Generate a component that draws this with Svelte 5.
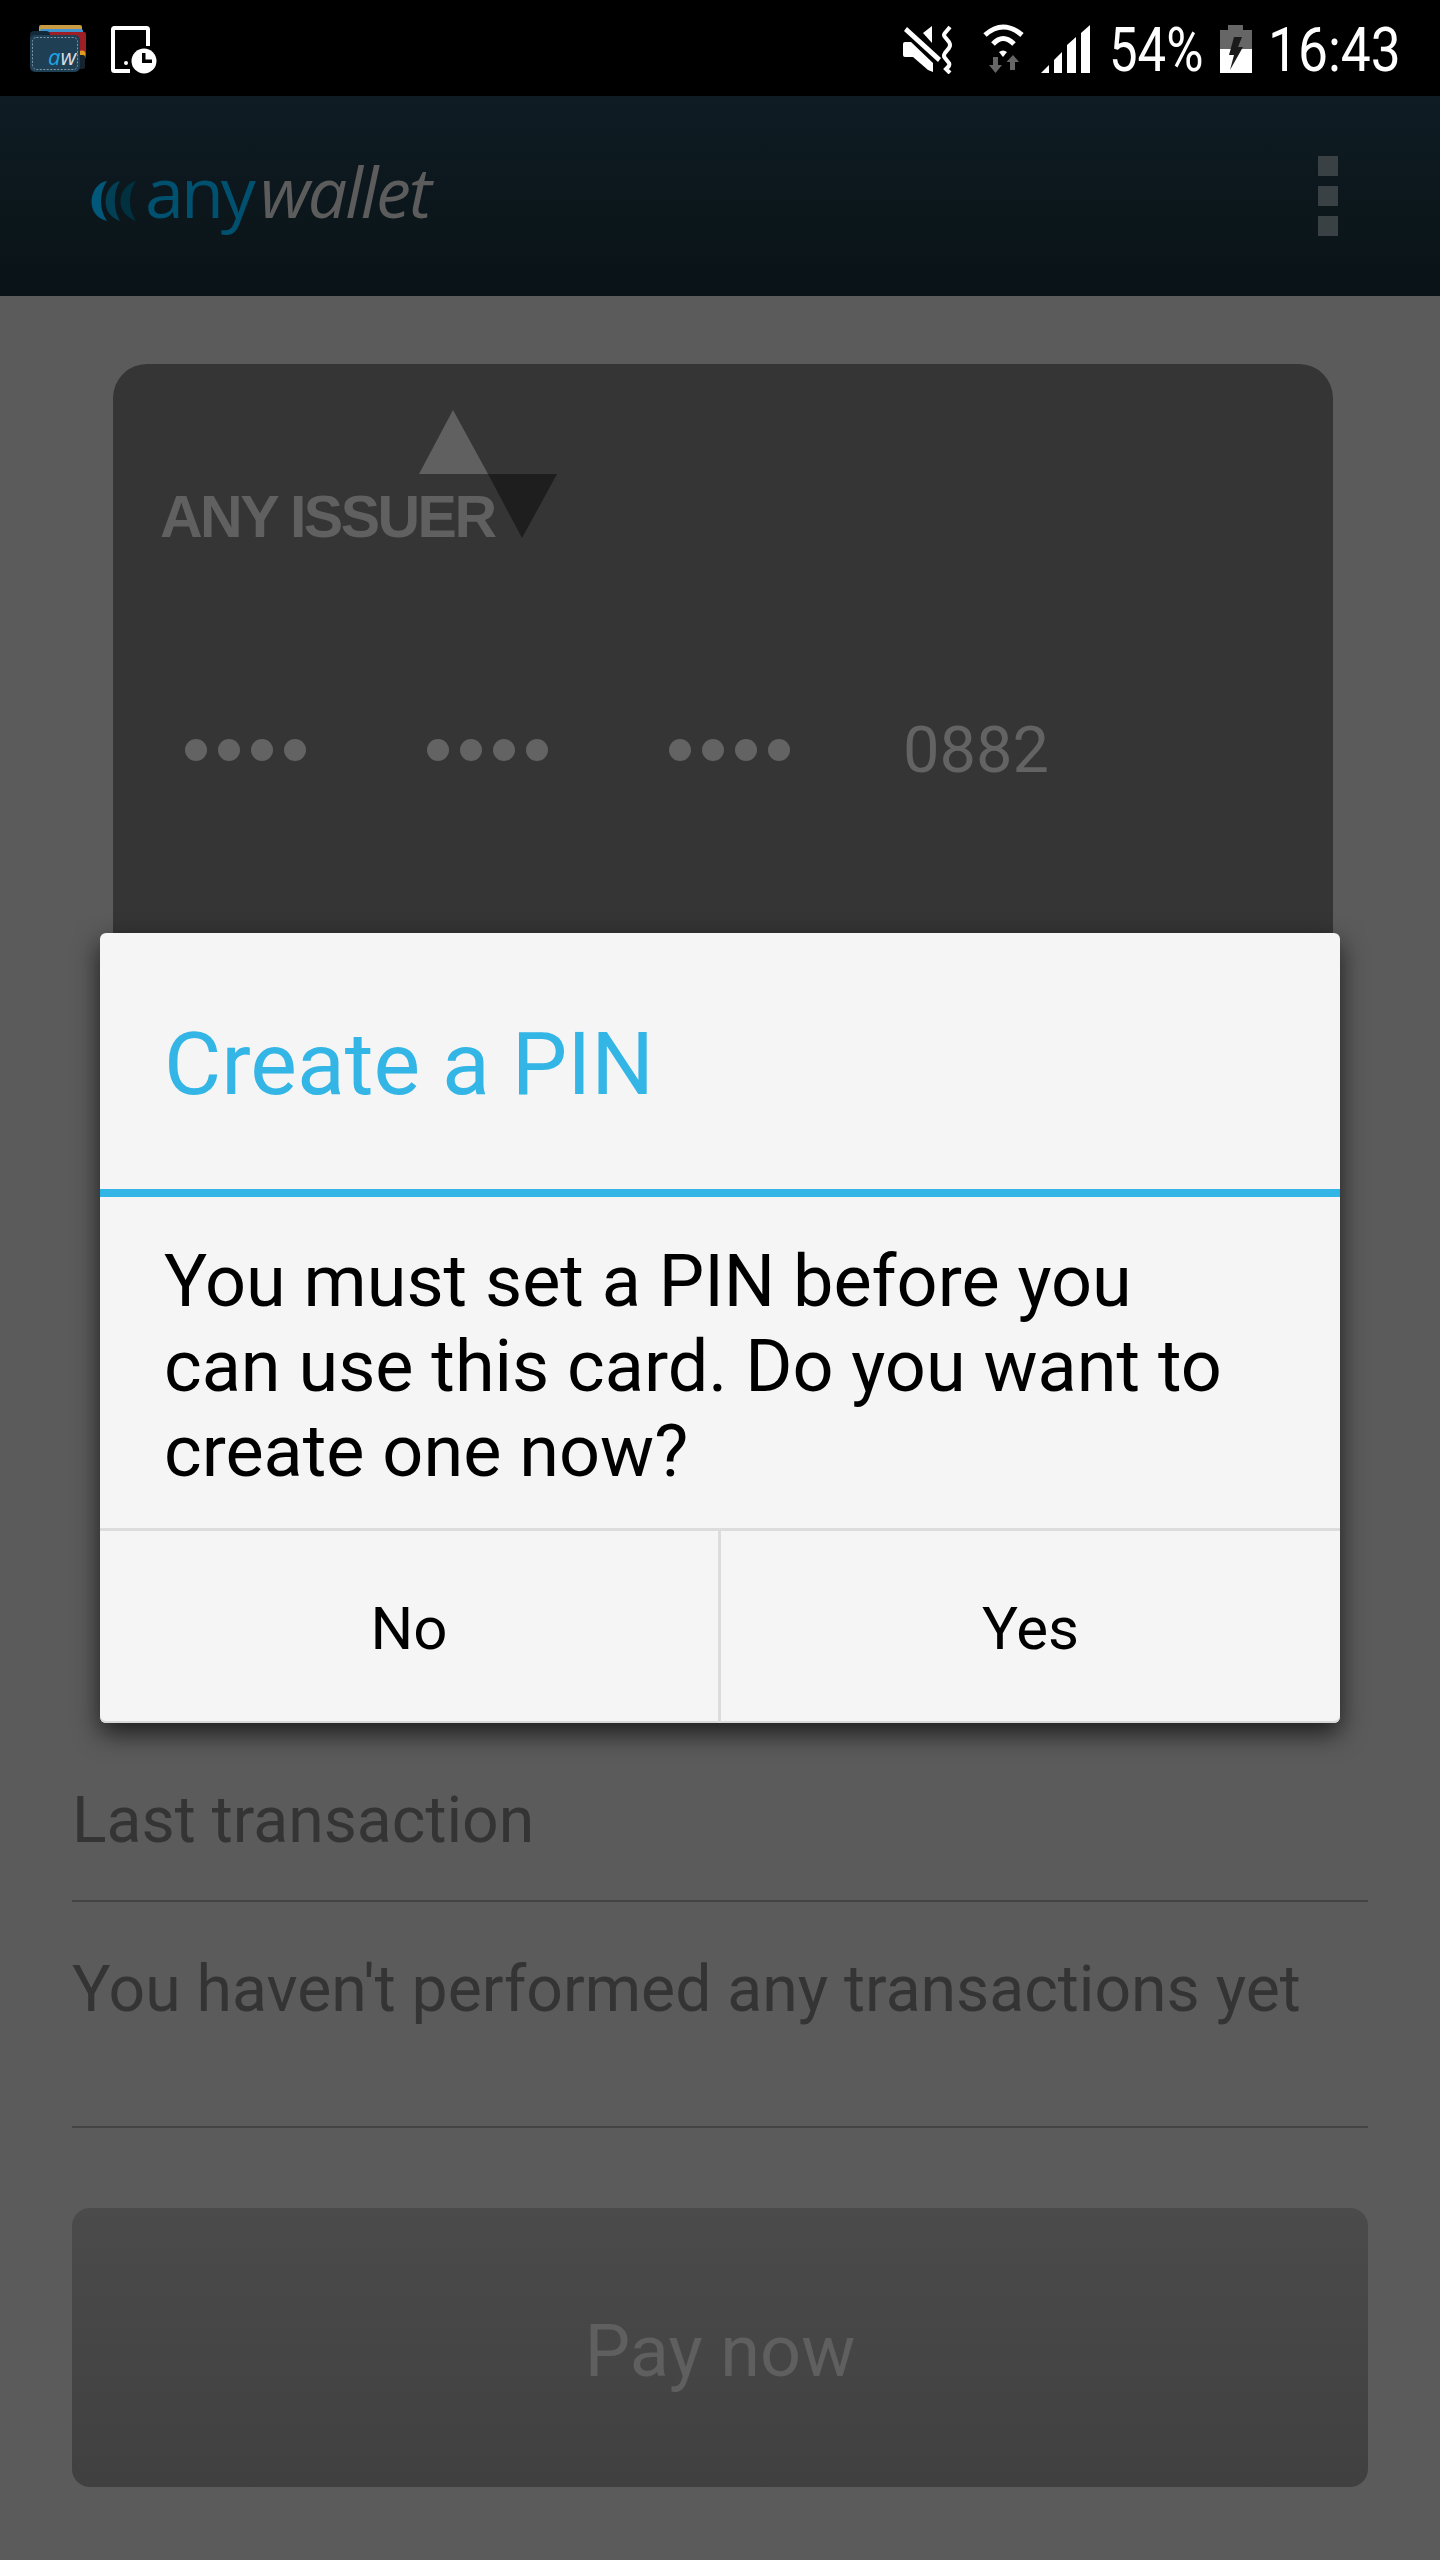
<script>
  const groups = [0, 1, 2];
  const dots = [0, 1, 2, 3];
  const bodyLines = ['You must set a PIN before you', 'can use this card. Do you want to', 'create one now?'];
</script>

<div class="page">
  <header class="status">
    <div class="status-left">
      <svg class="wallet" width="56" height="50" viewBox="0 0 56 50">
        <rect x="9" y="0" width="43" height="28" rx="2" fill="#c99b45" />
        <rect x="10" y="4" width="43" height="26" rx="2" fill="#3f93cf" />
        <rect x="13" y="7" width="43" height="27" rx="2" fill="#9e1e26" />
        <circle cx="52" cy="29" r="3.500" fill="#e29a20" />
        <rect x="40" y="30" width="15" height="14" rx="2" fill="#14232e" />
        <rect x="0" y="6" width="20" height="30" rx="4" fill="#12293a" />
        <rect x="0" y="10" width="50" height="37" rx="5" fill="#1f3f55" />
        <rect x="2.500" y="12.500" width="45" height="32" rx="4" fill="none" stroke="#7f99a8" stroke-width="1" stroke-dasharray="2 1.500" />
        <text x="18" y="40" class="aw"><tspan fill="#1ea6e6">a</tspan><tspan fill="#d8dde0">w</tspan></text>
      </svg>
      <svg width="46" height="50" viewBox="0 0 46 50">
        <path d="M19 46H3.500a1.500 1.500 0 0 1-1.500-1.500V4.500A1.500 1.500 0 0 1 3.500 3h32A1.500 1.500 0 0 1 37 4.500V21" fill="none" stroke="#fff" stroke-width="4" />
        <circle cx="15" cy="38" r="2" fill="#fff" />
        <circle cx="33" cy="36" r="12.500" fill="#fff" />
        <path d="M31 28h3.500v6.500H41V38H31z" fill="#000" />
      </svg>
    </div>
    <div class="status-right">
      <svg class="ic-mute" width="50" height="49" viewBox="0 0 50 49">
        <path d="M0 19 Q0 17 2 17 H8 L30 38 V47 L25 45 L10 32 H2 Q0 32 0 30z" fill="#fff" />
        <path d="M29 1 L20 8 L29 18z" fill="#fff" />
        <path d="M1 3 L4 0 L40 35 L36 39z" fill="#000" />
        <path d="M1 6 L4 2 L38 33 L35 37z" fill="#fff" />
        <path d="M47 2 L42 8 Q40 10 42 12 L46 17 Q48 20 46 23 L42 28 Q40 31 42 33 L46 38 Q47 40 45 42 L43 44 L47 48" fill="none" stroke="#fff" stroke-width="4" />
      </svg>
      <svg class="ic-wifi" width="44" height="50" viewBox="0 0 44 50">
        <path d="M2 11 Q20 -5 39 11 M10 20 Q20 9 31 20" fill="none" stroke="#fff" stroke-width="5" />
        <path d="M16 28 Q20 25 24 28 L20 33z" fill="#fff" />
        <path d="M10 33h5v8h4l-6.500 8L6 41h4z M27 46h5v-8h4l-6-7-6.500 7H27z" fill="#666" />
      </svg>
      <svg class="ic-signal" width="49" height="48" viewBox="0 0 49 48">
        <path d="M0 48 L8 40 V48z M13 48 V35 L21 27 V48z M26 48 V20 L35 12 V48z M40 48 V8 L49 0 V48z" fill="#fff" />
      </svg>
      <span class="stat-text pct">54%</span>
      <svg class="ic-batt" width="32" height="48" viewBox="0 0 32 48">
        <path d="M8 0h15v5h9v20H0V5h8z" fill="#666" />
        <rect x="0" y="24" width="32" height="24" fill="#fff" />
        <path d="M22 12 18 22h5L10 45l4-15H9l5-18z" fill="#1a1a1a" />
      </svg>
      <span class="stat-text time">16:43</span>
    </div>
  </header>

  <div class="appbar">
    <div class="logo">
      <svg class="arcs" width="50" height="42" viewBox="0 0 50 42">
        <path d="M20 1C3 3-4 35 20 41 12 30 12 12 20 1z" fill="#02587a" />
        <path d="M33 1C18 4 10 33 33 41 26 30 26 12 33 1z" fill="#024056" />
        <path d="M49 1C32 5 25 32 49 41 41 30 41 12 49 1z" fill="#01303f" />
      </svg>
      <span class="any">any</span><span class="wal">wallet</span>
    </div>
    <div class="menu"><i></i><i></i><i></i></div>
  </div>

  <main>
    <section class="card">
      <div class="issuer">
        <span class="issuer-name">ANY ISSUER</span>
        <svg class="tri" width="138" height="128" viewBox="0 0 138 128">
          <path d="M34 0 69 64H0z" fill="#606060" />
          <path d="M69 64h69l-35 64z" fill="#1e1e1e" />
        </svg>
      </div>
      <div class="number">
        {#each groups as g}
          <div class="dots">
            {#each dots as d}<i></i>{/each}
          </div>
        {/each}
        <span class="last4">0882</span>
      </div>
    </section>

    <div class="row first"><span>Last transaction</span></div>
    <div class="row second"><span>You haven't performed any transactions yet</span></div>
    <button class="pay">Pay now</button>
  </main>

  <div class="dialog">
    <h2>Create a PIN</h2>
    <div class="msg">
      {#each bodyLines as line}<p>{line}</p>{/each}
    </div>
    <div class="actions">
      <button>No</button>
      <button>Yes</button>
    </div>
  </div>
</div>

<style>
  :global(body) { margin: 0; background: #5b5b5b; }
  .page {
    position: relative;
    width: 1440px;
    height: 2560px;
    overflow: hidden;
    background: #5b5b5b;
    font-family: Roboto, sans-serif;
  }
  .status {
    height: 96px;
    background: #000;
    display: flex;
    justify-content: space-between;
    align-items: flex-start;
    padding: 25px 41px 0 30px;
    box-sizing: border-box;
  }
  .status-left { display: flex; gap: 25px; }
  .status-right { display: flex; align-items: flex-start; }
  .aw { font-family: "Open Sans", sans-serif; font-size: 22px; font-style: italic; }
  .ic-mute { margin-right: 30px; }
  .ic-wifi { margin-right: 14px; margin-top: -1px; }
  .ic-signal { margin-right: 19px; }
  .ic-batt { margin: 0 16px 0 11px; }
  .stat-text {
    color: #fff;
    font-weight: 400;
    font-size: 62px;
    line-height: 50px;
    display: inline-block;
    white-space: nowrap;
    transform-origin: left top;
  }
  .pct { width: 100px; transform: scaleX(.82); }
  .time { width: 131px; transform: scaleX(.86); }

  .appbar {
    height: 200px;
    background: linear-gradient(#0e1c23, #0a1317);
    display: flex;
    align-items: flex-start;
    justify-content: space-between;
    padding: 0 102px 0 87px;
    box-sizing: border-box;
  }
  .logo { display: flex; align-items: baseline; margin-top: 47px; font-family: "Open Sans", sans-serif; font-size: 70px; line-height: 96px; }
  .arcs { align-self: flex-start; margin: 37px 8px 0 0; }
  .any { color: #00506f; letter-spacing: -3px; }
  .wal { color: #5c5c5c; font-style: italic; margin-left: 7px; letter-spacing: -2.200px; }
  .menu { display: flex; flex-direction: column; gap: 10px; margin-top: 60px; }
  .menu i { display: block; width: 20px; height: 20px; background: #3a4144; }

  main { padding: 68px 72px 0; }
  .card {
    margin: 0 35px 0 41px;
    height: 770px;
    background: #353535;
    border-radius: 34px;
    box-sizing: border-box;
    padding: 46px 48px 0 47px;
  }
  .issuer { display: flex; align-items: flex-start; }
  .issuer-name {
    font-family: "Liberation Sans", sans-serif;
    font-weight: 700;
    font-size: 59px;
    letter-spacing: -2.500px;
    color: #606060;
    line-height: 60px;
    margin-top: 77px;
  }
  .tri { margin-left: -76px; }
  .number { display: flex; align-items: center; margin: 168px 0 0 25px; height: 70px; }
  .dots { display: flex; gap: 11px; width: 242px; }
  .dots i { display: block; width: 22px; height: 22px; border-radius: 50%; background: #636363; }
  .last4 { font-size: 65px; color: #636363; margin-left: -8px; }

  .row { color: #343434; font-size: 64.250px; line-height: 80px; border-bottom: 2px solid #434343; }
  .first { margin-top: 646px; height: 120px; }
  .second { margin-top: 45px; height: 181px; padding-top: 2px; box-sizing: border-box; }
  .row span { display: block; }

  .pay {
    display: block;
    width: 100%;
    height: 279px;
    margin-top: 80px;
    border: 0;
    border-radius: 18px;
    padding: 7px 0 0;
    background: linear-gradient(#4b4b4b, #404040);
    color: #5f5f5f;
    font: 400 72px Roboto, sans-serif;
  }

  .dialog {
    position: absolute;
    left: 100px;
    top: 933px;
    width: 1240px;
    height: 790px;
    background: #f5f5f5;
    border-radius: 6px;
    box-shadow: 0 10px 26px rgba(0, 0, 0, .7), inset 0 -2px 0 #d8d8d8;
    display: flex;
    flex-direction: column;
  }
  h2 {
    margin: 0;
    height: 264px;
    box-sizing: border-box;
    padding: 76px 0 0 64px;
    border-bottom: 8px solid #33b5e5;
    color: #33b5e5;
    font-weight: 400;
    font-size: 88px;
    line-height: 110px;
    flex: none;
  }
  .msg { flex: 1; padding: 42px 0 0 64px; color: #000; font-size: 72px; line-height: 85px; }
  .msg p { margin: 0; }
  .actions { flex: none; height: 195px; box-sizing: border-box; display: flex; border-top: 3px solid #dcdcdc; }
  .actions button {
    flex: 1;
    background: none;
    border: 0;
    color: #000;
    font: 400 60px Roboto, sans-serif;
    padding: 2px 0 0;
  }
  .actions button:first-child { flex: 0 0 618px; }
  .actions button + button { border-left: 3px solid #dcdcdc; }
</style>
